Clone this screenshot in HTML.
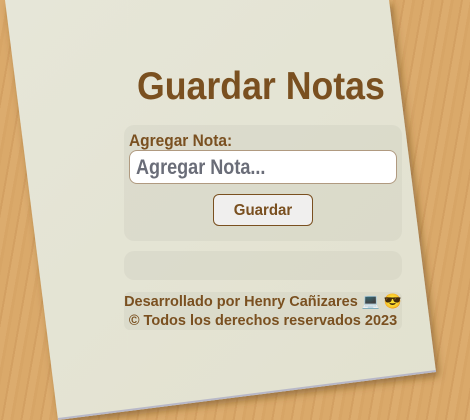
<!DOCTYPE html>
<html><head><meta charset="utf-8"><style>
html,body{margin:0;padding:0;width:470px;height:420px;overflow:hidden;background:#d8a868;}
body{position:relative;font-family:"Liberation Sans Narrow","Liberation Sans",sans-serif;font-weight:bold;color:#7a5020;}
.wood{position:absolute;inset:0;background:repeating-linear-gradient(100deg,#dcac6e 0 7px,#d7a566 7px 10px,#daa96a 10px 17px,#d3a062 17px 19px);}
svg.p{position:absolute;left:0;top:0;}
.abs{position:absolute;white-space:nowrap;}
.box{background:rgba(0,0,0,0.035);border-radius:10px;}
</style></head><body>
<div class="wood"></div>
<svg class="p" width="470" height="420">
<defs><linearGradient id="g" x1="0" y1="0" x2="1" y2="1"><stop offset="0" stop-color="#e6e6d8"/><stop offset="1" stop-color="#e2e1cf"/></linearGradient>
<filter id="s" x="-10%" y="-10%" width="120%" height="120%"><feDropShadow dx="3" dy="4" stdDeviation="4" flood-color="#5a3a10" flood-opacity="0.5"/></filter></defs>
<polygon points="5,0 389,0 436,372 58,420" fill="url(#g)" filter="url(#s)"/>
<line x1="58" y1="419" x2="436" y2="371" stroke="#b8b8c8" stroke-width="2"/>
</svg>
<div class="abs" style="left:137px;top:64px;font-size:39px;line-height:46px;transform:scaleX(0.915);transform-origin:left">Guardar Notas</div>
<div class="abs box" style="left:124px;top:125px;width:278px;height:116px"></div>
<div class="abs" style="left:129px;top:131px;font-size:17px;line-height:20px;transform:scaleX(0.91);transform-origin:left">Agregar Nota:</div>
<div class="abs" style="left:129px;top:150px;width:266px;height:32px;background:#fff;border:1px solid #b09a80;border-radius:8px;box-sizing:content-box"></div>
<div class="abs" style="left:136px;top:155px;font-size:21px;line-height:25px;color:#6a6d78;transform:scaleX(0.86);transform-origin:left">Agregar Nota...</div>
<div class="abs" style="left:213px;top:194px;width:98px;height:30px;background:#f0efee;border:1px solid #7a5020;border-radius:6px;"></div>
<div class="abs" style="left:213px;top:194px;width:100px;text-align:center;font-size:16px;line-height:33px;transform:scaleX(0.94)">Guardar</div>
<div class="abs box" style="left:124px;top:251px;width:278px;height:29px"></div>
<div class="abs box" style="left:124px;top:292px;width:278px;height:38px;border-radius:6px"></div>
<div class="abs" style="left:124px;top:293px;width:278px;text-align:center;font-size:14.5px;line-height:19px">Desarrollado por Henry Cañizares 💻 😎<br>© Todos los derechos reservados 2023</div>
</body></html>
